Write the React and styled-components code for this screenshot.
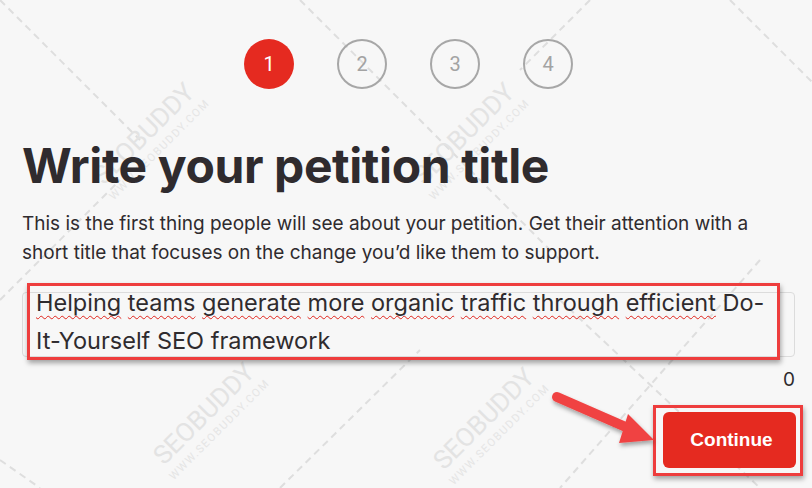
import React from "react";
import styled, { createGlobalStyle } from "styled-components";

const GlobalStyle = createGlobalStyle`
  html, body {
    margin: 0;
    padding: 0;
    background: #f7f7f7;
  }
  body {
    font-family: Inter, "Noto Sans", sans-serif;
    color: #2f2b2e;
  }
`;

const Page = styled.div`
  position: relative;
  width: 812px;
  height: 488px;
  overflow: hidden;
  box-sizing: border-box;
  padding: 39px 17px 0 22px;
`;

const Content = styled.div`
  position: relative;
`;

const Steps = styled.div`
  display: flex;
  justify-content: center;
  gap: 43px;
`;

const Step = styled.div`
  width: 50px;
  height: 50px;
  border-radius: 50%;
  box-sizing: border-box;
  display: flex;
  align-items: center;
  justify-content: center;
  font-family: Roboto, sans-serif;
  font-size: 20px;
  background: ${(p) => (p.$active ? "#e52a20" : "transparent")};
  color: ${(p) => (p.$active ? "#fff" : "#a3a3a3")};
  border: ${(p) => (p.$active ? "none" : "2px solid #a7a7a7")};
`;

const Title = styled.h1`
  margin: 48px 0 0;
  font-size: 48px;
  line-height: 58px;
  font-weight: 700;
  letter-spacing: -0.4px;
  color: #2f2b2e;
`;

const Lead = styled.p`
  margin: 14px 0 0;
  font-size: 19px;
  line-height: 29px;
  color: #2f2b2e;
  max-width: 736px;
`;

const InputBox = styled.div`
  position: relative;
  margin-top: 25px;
  height: 65px;
  box-sizing: border-box;
  border: 1px solid #dcdcdc;
  border-radius: 4px;
`;

const InputText = styled.div`
  margin-top: -9px;
  padding: 0 10px 0 13px;
  font-size: 23.5px;
  line-height: 38px;
  color: #2f2b2e;
  outline: none;
  text-decoration-skip-ink: none;
`;

const Typo = styled.span`
  text-decoration: underline wavy #e0241c;
  text-decoration-thickness: 1px;
  text-underline-offset: 4px;
`;

const Highlight = styled.div`
  position: absolute;
  left: 4px;
  top: -10px;
  width: 753px;
  height: 77px;
  box-sizing: border-box;
  border: 3px solid #ee3d3d;
  box-shadow: 1px 3px 5px rgba(0, 0, 0, 0.35);
  pointer-events: none;
`;

const Counter = styled.div`
  text-align: right;
  margin-top: 11px;
  font-size: 19px;
  line-height: 24px;
  color: #2f2b2e;
`;

const Actions = styled.div`
  display: flex;
  justify-content: flex-end;
  margin-top: 13px;
  margin-right: -8px;
`;

const ButtonFrame = styled.div`
  border: 3px solid #ee3d3d;
  padding: 4px 4px 5px 7px;
  box-shadow: 1px 3px 5px rgba(0, 0, 0, 0.35);
`;

const ContinueButton = styled.button`
  display: block;
  width: 133px;
  height: 56px;
  border: none;
  border-radius: 6px;
  background: #e52a20;
  color: #fff;
  font-family: "Liberation Sans", Arial, sans-serif;
  font-weight: 700;
  font-size: 19px;
  padding: 0 0 0 4px;
  cursor: pointer;
`;

const Overlay = styled.svg`
  position: absolute;
  inset: 0;
  pointer-events: none;
`;

const marks = [
  [150, 140],
  [470, 140],
  [210, 420],
  [490, 425],
];

const Watermark = () => (
  <Overlay width="812" height="488" viewBox="0 0 812 488">
    <g stroke="#dedede" strokeWidth="2" strokeDasharray="7 5" fill="none">
      <line x1="0" y1="0" x2="140" y2="140" />
      <line x1="300" y1="0" x2="560" y2="260" />
      <line x1="590" y1="0" x2="520" y2="70" />
      <line x1="730" y1="0" x2="812" y2="82" />
      <line x1="0" y1="300" x2="120" y2="180" />
      <line x1="560" y1="300" x2="760" y2="488" />
      <line x1="760" y1="260" x2="560" y2="488" />
      <line x1="0" y1="460" x2="40" y2="488" />
      <line x1="280" y1="488" x2="420" y2="350" />
    </g>
    {marks.map(([x, y]) => (
      <g key={`${x}-${y}`} transform={`translate(${x} ${y}) rotate(-45)`}>
        <text
          x="0"
          y="0"
          textAnchor="middle"
          fontFamily="Roboto, sans-serif"
          fontSize="26"
          fill="#e3e3e3"
        >
          SEOBUDDY
        </text>
        <text
          x="0"
          y="17"
          textAnchor="middle"
          fontFamily="Roboto, sans-serif"
          fontSize="11"
          fill="#e5e5e5"
          letterSpacing="1.5"
        >
          WWW.SEOBUDDY.COM
        </text>
      </g>
    ))}
  </Overlay>
);

const Arrow = () => (
  <Overlay width="812" height="488" viewBox="0 0 812 488">
    <defs>
      <filter id="arrowShadow" x="-20%" y="-20%" width="140%" height="160%">
        <feDropShadow dx="1" dy="3" stdDeviation="2" floodColor="#000" floodOpacity="0.35" />
      </filter>
    </defs>
    <g filter="url(#arrowShadow)" fill="#f04343">
      <line
        x1="557"
        y1="397"
        x2="628"
        y2="428"
        stroke="#f04343"
        strokeWidth="10"
        strokeLinecap="round"
      />
      <polygon points="628,414 654,440 619,443" />
    </g>
  </Overlay>
);

const typos = ["Helping", "teams", "generate", "more", "organic", "traffic", "through", "efficient"];

export default function App() {
  return (
    <Page>
      <GlobalStyle />
      <Watermark />
      <Content>
        <Steps>
          {[1, 2, 3, 4].map((n) => (
            <Step key={n} $active={n === 1}>
              {n}
            </Step>
          ))}
        </Steps>
        <Title>Write your petition title</Title>
        <Lead>
          This is the first thing people will see about your petition. Get their
          attention with a short title that focuses on the change you’d like them
          to support.
        </Lead>
        <InputBox>
          <InputText role="textbox" contentEditable suppressContentEditableWarning>
            {typos.map((w) => (
              <React.Fragment key={w}>
                <Typo>{w}</Typo>{" "}
              </React.Fragment>
            ))}
            Do-It-Yourself SEO framework
          </InputText>
          <Highlight />
        </InputBox>
        <Counter>0</Counter>
        <Actions>
          <ButtonFrame>
            <ContinueButton>Continue</ContinueButton>
          </ButtonFrame>
        </Actions>
      </Content>
      <Arrow />
    </Page>
  );
}
